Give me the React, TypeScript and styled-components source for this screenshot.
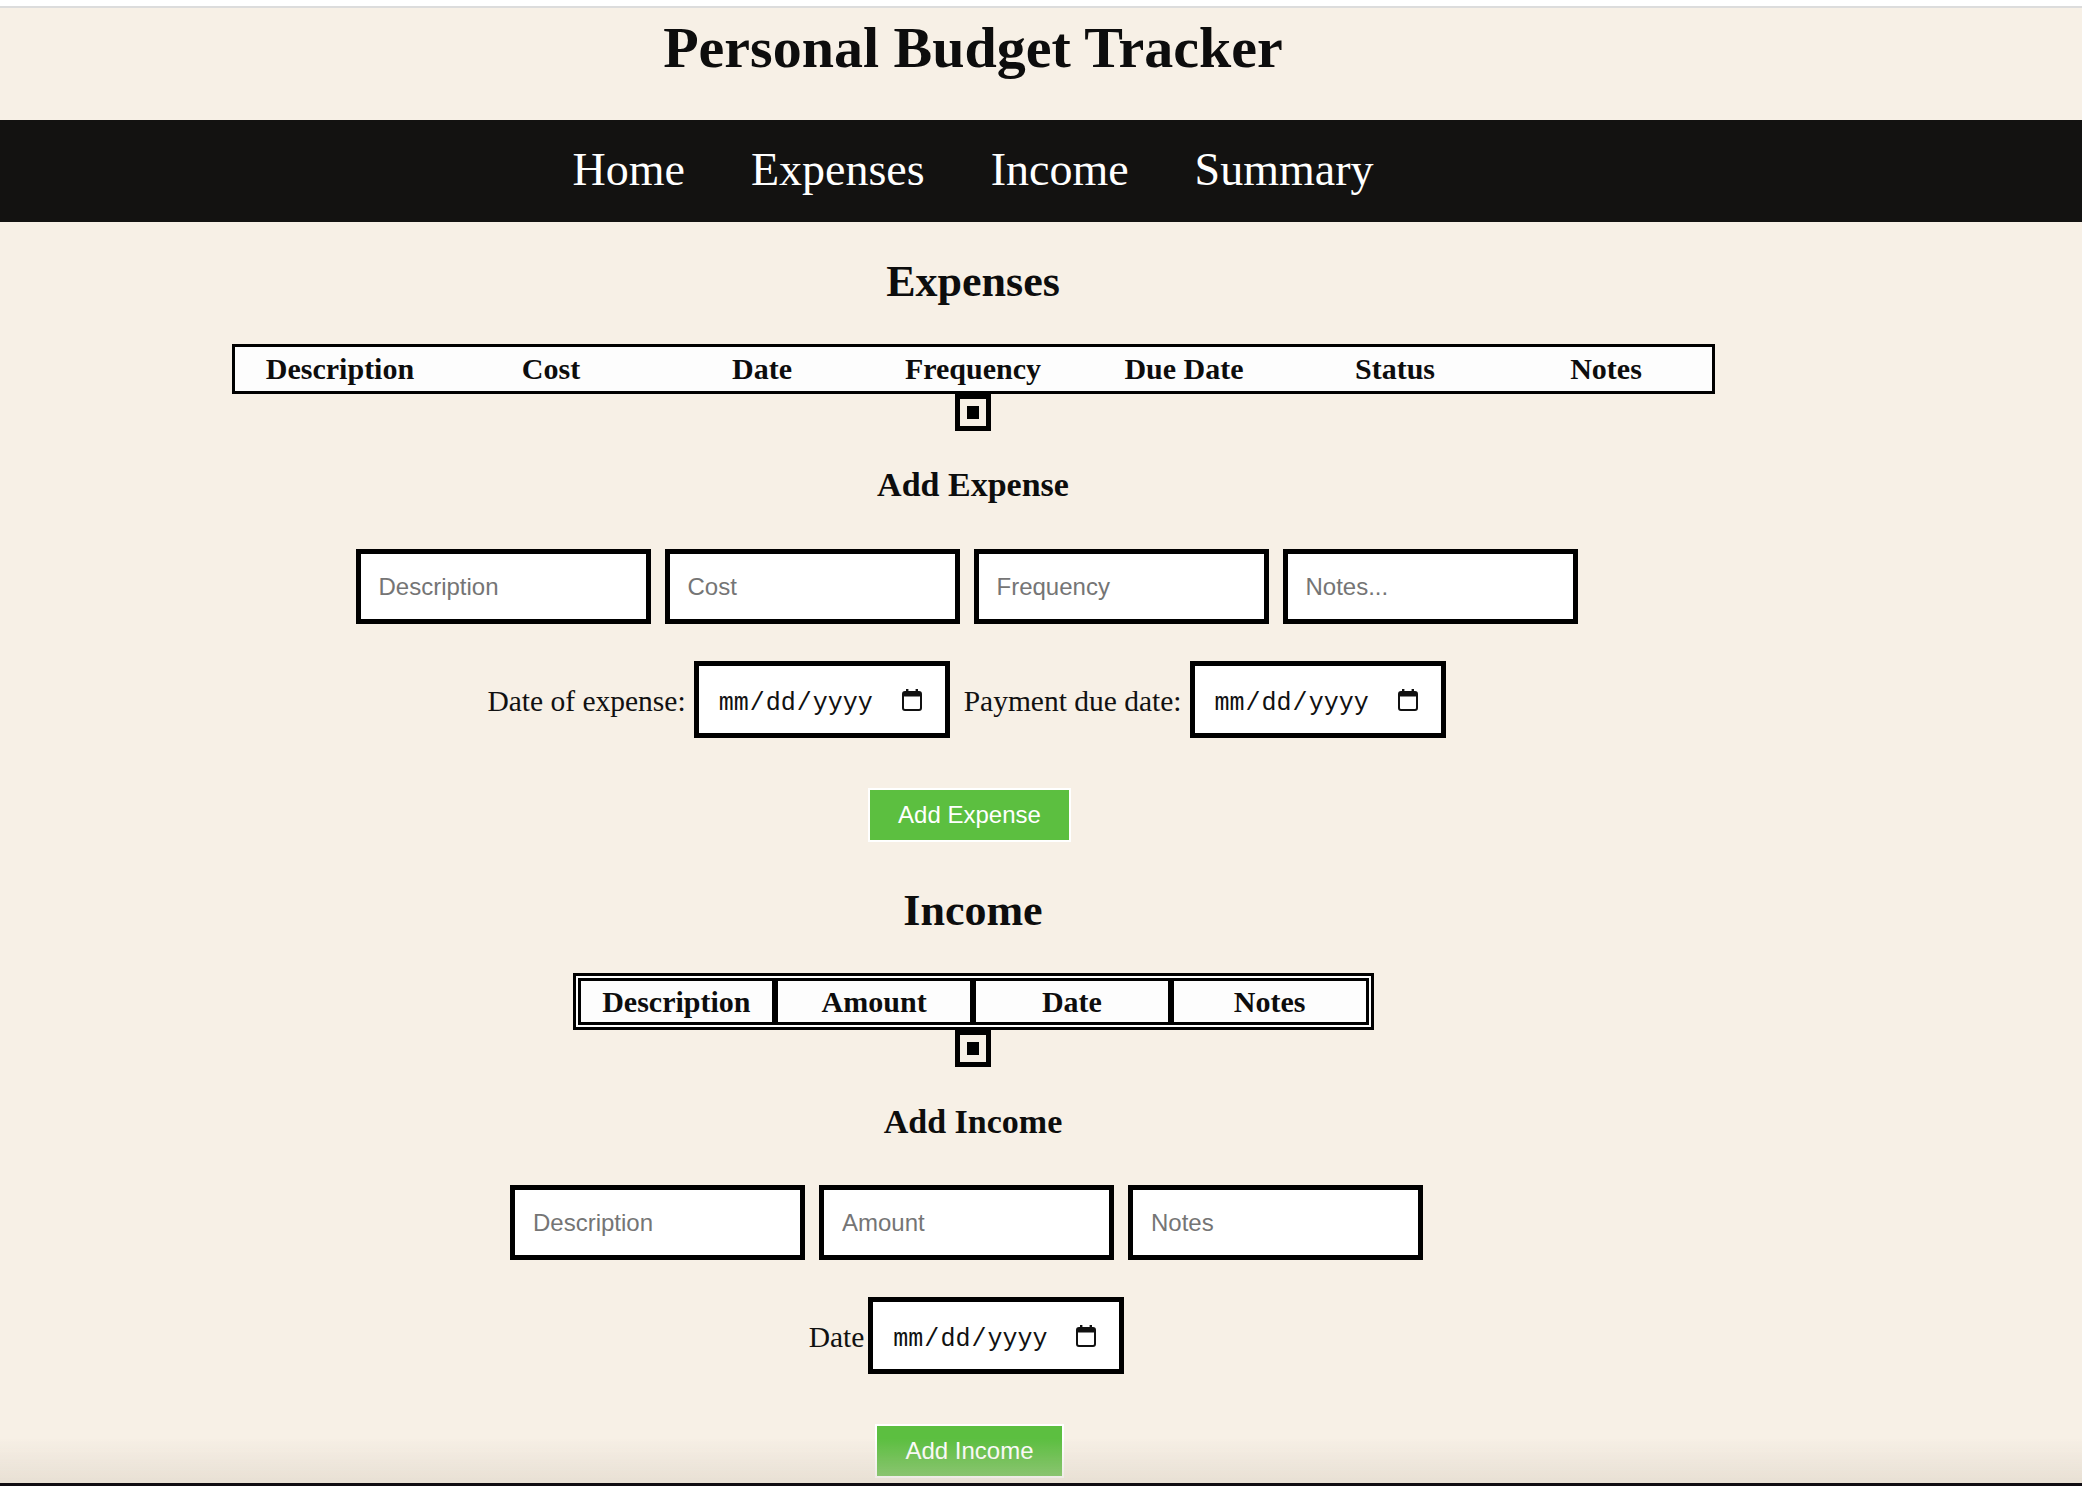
import React from "react";
import styled, { createGlobalStyle } from "styled-components";

const GlobalStyle = createGlobalStyle`
  html, body {
    margin: 0;
    padding: 0;
    background: #f7f0e6;
  }
  body {
    font-family: "Liberation Serif", "Times New Roman", serif;
    color: #111;
  }
  * { box-sizing: border-box; }
`;

const TopStrip = styled.div`
  height: 8px;
  background: #ffffff;
  border-bottom: 2px solid #dcdcdc;
`;

const Header = styled.header`
  width: 1946px;
  padding: 11px 0 43px;
  display: flex;
  justify-content: center;
`;

const Title = styled.h1`
  margin: 0;
  font-family: "Liberation Serif", "Times New Roman", serif;
  font-weight: 700;
  font-size: 58px;
  line-height: 58px;
  color: #0d0d0d;
`;

const NavBar = styled.nav`
  background: #131211;
  height: 102px;
`;

const NavInner = styled.div`
  width: 1946px;
  height: 100%;
  display: flex;
  justify-content: center;
  align-items: center;
  gap: 66px;
  padding-bottom: 2px;
`;

const NavLink = styled.a`
  font-family: "Liberation Serif", "Times New Roman", serif;
  font-size: 46px;
  line-height: 46px;
  color: #ffffff;
  text-decoration: none;
`;

const Main = styled.main`
  width: 1946px;
  display: flex;
  flex-direction: column;
  align-items: center;
  padding-bottom: 60px;
`;

const SectionTitle = styled.h2<{ $top: number }>`
  margin: ${(p) => p.$top}px 0 0;
  font-family: "Liberation Serif", "Times New Roman", serif;
  font-weight: 700;
  font-size: 44px;
  line-height: 44px;
  color: #0d0d0d;
`;

const SubTitle = styled.h3<{ $top: number }>`
  margin: ${(p) => p.$top}px 0 0;
  font-family: "Liberation Serif", "Times New Roman", serif;
  font-weight: 700;
  font-size: 34px;
  line-height: 34px;
  color: #0d0d0d;
`;

const ExpenseTable = styled.div`
  margin-top: 40px;
  width: 1483px;
  border: 3px solid #000;
  background: #fdfdfd;
  display: grid;
  grid-template-columns: repeat(7, 1fr);
`;

const ExpenseHead = styled.div`
  padding: 7px 0;
  text-align: center;
  font-weight: 700;
  font-size: 30px;
  line-height: 30px;
  color: #0d0d0d;
  white-space: nowrap;
`;

const IncomeTable = styled.div`
  margin-top: 40px;
  width: 801px;
  border: 3px solid #000;
  padding: 2px;
  background: #fdfdfd;
  display: grid;
  grid-template-columns: repeat(4, 1fr);
`;

const IncomeHead = styled.div`
  border: 3px solid #000;
  padding: 6px 0 5px;
  text-align: center;
  font-weight: 700;
  font-size: 30px;
  line-height: 30px;
  color: #0d0d0d;
  white-space: nowrap;
`;

const EmptyBody = styled.div`
  width: 36px;
  height: 37px;
  border: 5px solid #000;
  background: #f7f0e6;
  display: flex;
  align-items: center;
  justify-content: center;
`;

const EmptyCell = styled.div`
  width: 12px;
  height: 13px;
  background: #000;
`;

const InputRow = styled.div<{ $top: number }>`
  margin-top: ${(p) => p.$top}px;
  display: flex;
  gap: 14px;
  padding-right: 13px;
`;

const TextInput = styled.input`
  width: 295px;
  height: 75px;
  border: 5px solid #000;
  border-radius: 0;
  background: #fff;
  padding: 0 18px;
  font-family: "Liberation Sans", Arial, sans-serif;
  font-size: 24px;
  color: #111;
  outline: none;
  &::placeholder {
    color: #757575;
  }
`;

const DateRow = styled.div`
  margin-top: 37px;
  display: flex;
  align-items: center;
  padding-right: 13px;
`;

const FieldLabel = styled.label<{ $gap: number; $lead?: number }>`
  font-family: "Liberation Serif", "Times New Roman", serif;
  font-size: 29.5px;
  line-height: 30px;
  color: #111;
  margin-right: ${(p) => p.$gap}px;
  margin-left: ${(p) => p.$lead ?? 0}px;
  padding-top: 2px;
`;

const DateField = styled.span`
  position: relative;
  display: inline-flex;
`;

const DateInput = styled.input`
  width: 256px;
  height: 77px;
  border: 5px solid #000;
  border-radius: 0;
  background: #fff;
  padding: 8px 20px 0 19px;
  font-family: "Liberation Mono", "Courier New", monospace;
  font-size: 25px;
  color: #111;
  outline: none;
  &::-webkit-calendar-picker-indicator {
    width: 21px;
    height: 21px;
    padding: 0;
    margin: 0 0 4px 0;
    opacity: 0;
  }
`;

const CalendarIcon = styled.svg`
  position: absolute;
  right: 28px;
  top: 28px;
  width: 20px;
  height: 22px;
  pointer-events: none;
`;

const AddButton = styled.button<{ $shift: number }>`
  margin-top: 50px;
  margin-right: ${(p) => p.$shift}px;
  height: 54px;
  padding: 0 28px;
  border: 2px solid #ffffff;
  border-radius: 0;
  background: #5cbf40;
  color: #ffffff;
  font-family: "Liberation Sans", Arial, sans-serif;
  font-size: 24px;
  cursor: pointer;
`;

const BottomShade = styled.div`
  position: fixed;
  left: 0;
  right: 0;
  bottom: 0;
  height: 48px;
  background: linear-gradient(to bottom, rgba(230, 220, 205, 0), rgba(214, 204, 190, 0.45));
  border-bottom: 3px solid #0f0c12;
  pointer-events: none;
`;

const expenseCols = ["Description", "Cost", "Date", "Frequency", "Due Date", "Status", "Notes"];
const incomeCols = ["Description", "Amount", "Date", "Notes"];

function DatePicker({ id }: { id: string }) {
  return (
    <DateField>
      <DateInput id={id} type="date" />
      <CalendarIcon viewBox="0 0 20 22" aria-hidden="true">
        <rect x="4" y="0" width="2.4" height="4" fill="#111" />
        <rect x="13.6" y="0" width="2.4" height="4" fill="#111" />
        <rect x="1" y="3" width="18" height="18" rx="2" fill="none" stroke="#111" strokeWidth="2" />
        <rect x="1" y="3" width="18" height="4.5" rx="1.5" fill="#111" />
      </CalendarIcon>
    </DateField>
  );
}

export default function App() {
  return (
    <>
      <GlobalStyle />
      <TopStrip />
      <Header>
        <Title>Personal Budget Tracker</Title>
      </Header>
      <NavBar>
        <NavInner>
          <NavLink href="#home">Home</NavLink>
          <NavLink href="#expenses">Expenses</NavLink>
          <NavLink href="#income">Income</NavLink>
          <NavLink href="#summary">Summary</NavLink>
        </NavInner>
      </NavBar>
      <Main>
        <SectionTitle $top={38}>Expenses</SectionTitle>
        <ExpenseTable>
          {expenseCols.map((c) => (
            <ExpenseHead key={c}>{c}</ExpenseHead>
          ))}
        </ExpenseTable>
        <EmptyBody>
          <EmptyCell />
        </EmptyBody>

        <SubTitle $top={37}>Add Expense</SubTitle>
        <InputRow $top={47}>
          <TextInput placeholder="Description" />
          <TextInput placeholder="Cost" />
          <TextInput placeholder="Frequency" />
          <TextInput placeholder="Notes..." />
        </InputRow>
        <DateRow>
          <FieldLabel $gap={8} htmlFor="exp-date">Date of expense:</FieldLabel>
          <DatePicker id="exp-date" />
          <FieldLabel $gap={8} $lead={14} htmlFor="due-date">Payment due date:</FieldLabel>
          <DatePicker id="due-date" />
        </DateRow>
        <AddButton $shift={7}>Add Expense</AddButton>

        <SectionTitle $top={47}>Income</SectionTitle>
        <IncomeTable>
          {incomeCols.map((c) => (
            <IncomeHead key={c}>{c}</IncomeHead>
          ))}
        </IncomeTable>
        <EmptyBody>
          <EmptyCell />
        </EmptyBody>

        <SubTitle $top={38}>Add Income</SubTitle>
        <InputRow $top={46}>
          <TextInput placeholder="Description" />
          <TextInput placeholder="Amount" />
          <TextInput placeholder="Notes" />
        </InputRow>
        <DateRow>
          <FieldLabel $gap={4} htmlFor="inc-date">Date</FieldLabel>
          <DatePicker id="inc-date" />
        </DateRow>
        <AddButton $shift={7}>Add Income</AddButton>
      </Main>
      <BottomShade />
    </>
  );
}
